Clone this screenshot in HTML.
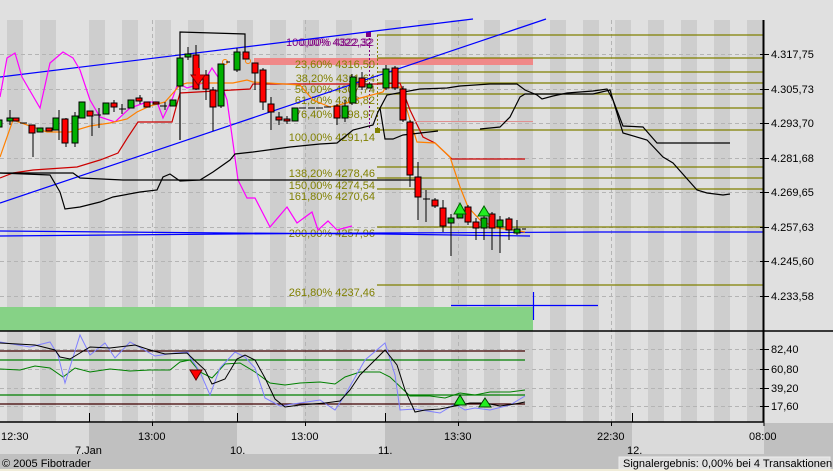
<!DOCTYPE html>
<html><head><meta charset="utf-8"><style>
html,body{margin:0;padding:0;background:#e0e0e0;}
svg{display:block;font-family:"Liberation Sans",sans-serif;}
</style></head><body>
<svg width="833" height="471" viewBox="0 0 833 471" xmlns="http://www.w3.org/2000/svg">
<rect width="833" height="471" fill="#e0e0e0"/>
<!-- stripes -->
<g fill="#cecece">
<rect x="7" y="20" width="16" height="402"/><rect x="40" y="20" width="16" height="402"/>
<rect x="89" y="20" width="16" height="402"/><rect x="122" y="20" width="16" height="402"/>
<rect x="155" y="20" width="16" height="402"/><rect x="188" y="20" width="16" height="402"/>
<rect x="237" y="20" width="16" height="402"/><rect x="270" y="20" width="16" height="402"/>
<rect x="303" y="20" width="16" height="402"/><rect x="336" y="20" width="16" height="402"/>
<rect x="385" y="20" width="16" height="402"/><rect x="418" y="20" width="16" height="402"/>
<rect x="451" y="20" width="16" height="402"/><rect x="484" y="20" width="16" height="402"/>
<rect x="517" y="20" width="16" height="402"/><rect x="550" y="20" width="16" height="402"/>
<rect x="583" y="20" width="16" height="402"/><rect x="615" y="20" width="16" height="402"/>
<rect x="648" y="20" width="16" height="402"/><rect x="681" y="20" width="16" height="402"/>
<rect x="714" y="20" width="16" height="402"/><rect x="747" y="20" width="16" height="402"/>
</g>
<!-- bottom axis area -->
<rect x="0" y="423" width="833" height="48" fill="#c0c0c0"/>
<g fill="#dadada">
<rect x="0" y="423" width="89" height="31"/><rect x="237" y="423" width="148" height="31"/><rect x="632" y="423" width="132" height="31"/>
</g>
<rect x="0" y="469" width="833" height="2" fill="#f0ecd8"/>
<!-- grid -->
<g stroke="#b4b4b4" stroke-dasharray="4,3" stroke-width="1">
<line x1="0" y1="54.5" x2="764" y2="54.5"/><line x1="0" y1="89.5" x2="764" y2="89.5"/>
<line x1="0" y1="123.5" x2="764" y2="123.5"/><line x1="0" y1="158.5" x2="764" y2="158.5"/>
<line x1="0" y1="192.5" x2="764" y2="192.5"/><line x1="0" y1="227.5" x2="764" y2="227.5"/>
<line x1="0" y1="261.5" x2="764" y2="261.5"/><line x1="0" y1="296.5" x2="764" y2="296.5"/>
<line x1="0" y1="349.5" x2="764" y2="349.5"/><line x1="0" y1="369.5" x2="764" y2="369.5"/>
<line x1="0" y1="388.5" x2="764" y2="388.5"/><line x1="0" y1="406.5" x2="764" y2="406.5"/>
<line x1="152.5" y1="20" x2="152.5" y2="422"/><line x1="305.5" y1="20" x2="305.5" y2="422"/>
<line x1="458.5" y1="20" x2="458.5" y2="422"/><line x1="611.5" y1="20" x2="611.5" y2="422"/>
</g>
<!-- bands -->
<rect x="254" y="58" width="279" height="7" fill="#f08888"/>
<rect x="0" y="307" width="533" height="24" fill="#86d286"/>
<!-- fibo lines -->
<g stroke="#808000" stroke-width="1.3">
<line x1="377" y1="35" x2="764" y2="35"/><line x1="377" y1="58" x2="764" y2="58"/>
<line x1="377" y1="72" x2="764" y2="72"/><line x1="377" y1="83" x2="764" y2="83"/>
<line x1="377" y1="94" x2="764" y2="94"/><line x1="377" y1="108" x2="764" y2="108"/>
<line x1="377" y1="130" x2="764" y2="130"/><line x1="377" y1="167" x2="764" y2="167"/>
<line x1="377" y1="178" x2="764" y2="178"/><line x1="377" y1="189" x2="764" y2="189"/>
<line x1="377" y1="227" x2="764" y2="227"/><line x1="377" y1="285" x2="764" y2="285"/>
</g>
<line x1="377.5" y1="35" x2="377.5" y2="130" stroke="#808000" stroke-dasharray="2,2"/>
<line x1="369.5" y1="34" x2="369.5" y2="130" stroke="#800080" stroke-dasharray="2,2"/>
<rect x="366" y="32" width="5" height="5" fill="#800080"/>
<rect x="375" y="128" width="5" height="5" fill="#808000"/>
<g fill="#808000" font-size="11" text-anchor="end">
<text x="375" y="68">23,60% 4316,50</text>
<text x="375" y="82">38,20% 4311,64</text>
<text x="375" y="93">50,00% 4307,74</text>
<text x="375" y="104">61,80% 4303,82</text>
<text x="375" y="118">76,40% 4298,97</text>
<text x="375" y="141">100,00% 4291,14</text>
<text x="375" y="177">138,20% 4278,46</text>
<text x="375" y="189">150,00% 4274,54</text>
<text x="375" y="200">161,80% 4270,64</text>
<text x="375" y="237">200,00% 4257,96</text>
<text x="375" y="296">261,80% 4237,46</text>
</g>
<text x="286" y="46" fill="#800080" font-size="11">100,00% 4322,32</text>
<text x="300" y="46" fill="#800080" font-size="11" opacity="0.8">0,00% 4322,32</text>
<!-- blue lines -->
<g stroke="#0000ff" stroke-width="1.2" fill="none">
<line x1="0" y1="77" x2="473" y2="19"/>
<line x1="0" y1="203" x2="546" y2="19"/>
<polyline points="0,231 230,233 380,234 530,236"/>
<polyline points="0,236 230,234 380,233 600,232 764,232"/>
<line x1="533.5" y1="292" x2="533.5" y2="320"/>
<line x1="451" y1="305.5" x2="598" y2="305.5"/>
</g>
<!-- red, orange, magenta, black -->
<polyline fill="none" stroke="#ff00ff" stroke-width="1.2" points="0,97 7,58 15,53 22,77 40,108 50,63 63,52 73,58 80,70 90,100 100,117 115,122 130,108 147,102 157,102 163,118 173,97 178,83 187,88 197,85 203,83 212,68 220,80 227,100 233,143 238,180 247,198 255,198 270,227 287,207 297,223 312,212 318,230 328,221 337,230 352,226"/>
<polyline fill="none" stroke="#cc0000" stroke-width="1.2" points="0,178 13,173 33,170 77,167 100,160 118,153 128,137 138,122 172,122 180,93 250,89 253,84 380,84 400,83 410,110 423,137 435,143 452,159 525,159"/>
<line x1="415" y1="121.5" x2="533" y2="121.5" stroke="#e09090"/>
<polyline fill="none" stroke="#ff8000" stroke-width="1.2" points="0,157 13,120 47,132 70,132 90,126 110,123 127,119 137,112 150,106 165,102 173,93 180,85 187,83 233,83 247,80 253,82 300,85 313,100 330,107 347,103 353,100 383,92 385,88 400,87 410,120 417,142 435,143 450,157 460,187 468,207 480,220 497,228 513,230 525,232"/>
<circle cx="225" cy="62" r="2.5" fill="none" stroke="#ff8000"/>
<circle cx="248" cy="61" r="2.5" fill="none" stroke="#ff8000"/>
<g fill="none" stroke="#000" stroke-width="1.2">
<polyline points="0,173 73,173 80,178 123,180 420,180"/>
<polyline points="60,192 65,209 80,207 100,202 113,197 140,192 157,190 163,177 170,174 180,181 200,180 213,172 230,160 235,154 253,152 290,147 320,144 337,143 353,130 373,125 378,112 387,95 420,89 447,88 460,86 490,84 517,84 525,90 537,95 542,99 553,96 567,93 593,91 607,89 613,100 623,126 643,127 657,143 730,143"/>
<polyline points="0,173 50,175 60,192"/>
<polyline points="380,108 385,139 393,139 403,135 438,131"/>
<polyline points="480,129 500,127 510,117 520,97 525,94 593,94 610,90 623,133 647,140 663,157 673,163 697,190 707,193 723,195 730,194"/>
<polyline points="180,140 180,32 245,34 245,52"/>
</g>
<!-- candles -->
<g stroke="#000" stroke-width="1">
<line x1="10" y1="110" x2="10" y2="125"/><line x1="33" y1="125" x2="33" y2="157"/>
<line x1="59" y1="110" x2="59" y2="140"/><line x1="66" y1="118" x2="66" y2="147"/><line x1="75" y1="112" x2="75" y2="147"/>
<line x1="92" y1="112" x2="92" y2="136"/><line x1="99" y1="108" x2="99" y2="128"/><line x1="114" y1="100" x2="114" y2="112"/><line x1="122" y1="104" x2="122" y2="114"/><line x1="140" y1="95" x2="140" y2="104"/><line x1="165" y1="102" x2="165" y2="110"/>
<line x1="180" y1="32" x2="180" y2="140"/><line x1="188" y1="47" x2="188" y2="60"/><line x1="196" y1="45" x2="196" y2="90"/>
<line x1="206" y1="70" x2="206" y2="100"/><line x1="213" y1="87" x2="213" y2="131"/><line x1="221" y1="64" x2="221" y2="108"/>
<line x1="237" y1="48" x2="237" y2="72"/><line x1="255" y1="63" x2="255" y2="90"/><line x1="263" y1="68" x2="263" y2="110"/>
<line x1="271" y1="97" x2="271" y2="130"/><line x1="279" y1="112" x2="279" y2="125"/><line x1="287" y1="116" x2="287" y2="124"/>
<line x1="337" y1="104" x2="337" y2="125"/><line x1="345" y1="100" x2="345" y2="122"/><line x1="352" y1="74" x2="352" y2="105"/><line x1="362" y1="72" x2="362" y2="90"/>
<line x1="386" y1="65" x2="386" y2="90"/><line x1="395" y1="66" x2="395" y2="90"/><line x1="403" y1="86" x2="403" y2="122"/>
<line x1="410" y1="120" x2="410" y2="187"/><line x1="418" y1="162" x2="418" y2="220"/><line x1="426" y1="190" x2="426" y2="222"/>
<line x1="435" y1="198" x2="435" y2="208"/><line x1="443" y1="200" x2="443" y2="232"/><line x1="451" y1="214" x2="451" y2="256"/>
<line x1="468" y1="205" x2="468" y2="225"/><line x1="476" y1="218" x2="476" y2="240"/><line x1="484" y1="215" x2="484" y2="240"/>
<line x1="492" y1="212" x2="492" y2="250"/><line x1="500" y1="216" x2="500" y2="253"/><line x1="509" y1="217" x2="509" y2="240"/><line x1="517" y1="220" x2="517" y2="235"/>
</g>
<g stroke="#000" stroke-width="1">
<!-- green -->
<rect x="-3" y="120" width="5" height="7" fill="#00b000"/>
<rect x="7" y="118" width="6" height="3" fill="#00b000"/>
<rect x="37" y="128" width="6" height="4" fill="#00b000"/>
<rect x="53" y="118" width="6" height="12" fill="#00b000"/>
<rect x="72" y="116" width="6" height="27" fill="#00b000"/>
<rect x="79" y="102" width="6" height="16" fill="#00b000"/>
<rect x="103" y="103" width="6" height="11" fill="#00b000"/>
<rect x="128" y="100" width="6" height="8" fill="#00b000"/>
<rect x="170" y="100" width="6" height="6" fill="#00b000"/>
<rect x="177" y="58" width="6" height="28" fill="#00b000"/>
<rect x="185" y="54" width="6" height="3" fill="#00b000"/>
<rect x="218" y="64" width="6" height="42" fill="#00b000"/>
<rect x="234" y="52" width="6" height="18" fill="#00b000"/>
<rect x="292" y="108" width="6" height="13" fill="#00b000"/>
<rect x="342" y="106" width="6" height="12" fill="#00b000"/>
<rect x="350" y="77" width="6" height="26" fill="#00b000"/>
<rect x="367" y="84" width="5" height="4" fill="#00b000"/>
<rect x="383" y="69" width="6" height="19" fill="#00b000"/>
<rect x="448" y="218" width="6" height="5" fill="#00b000"/>
<rect x="457" y="214" width="6" height="4" fill="#00b000"/>
<rect x="481" y="218" width="6" height="10" fill="#00b000"/>
<rect x="497" y="220" width="6" height="7" fill="#00b000"/>
<rect x="514" y="229" width="6" height="4" fill="#00b000"/>
<!-- red -->
<rect x="13" y="118" width="6" height="3" fill="#ff0000"/>
<rect x="29" y="125" width="6" height="8" fill="#ff0000"/>
<rect x="46" y="128" width="6" height="3" fill="#ff0000"/>
<rect x="62" y="119" width="6" height="24" fill="#ff0000"/>
<rect x="87" y="111" width="6" height="5" fill="#ff0000"/>
<rect x="111" y="103" width="6" height="4" fill="#ff0000"/>
<rect x="136" y="98" width="6" height="3" fill="#ff0000"/>
<rect x="144" y="102" width="6" height="5" fill="#ff0000"/>
<rect x="153" y="102" width="6" height="2" fill="#ff0000"/>
<rect x="193" y="55" width="6" height="34" fill="#ff0000"/>
<rect x="203" y="75" width="6" height="14" fill="#ff0000"/>
<rect x="210" y="90" width="6" height="17" fill="#ff0000"/>
<rect x="243" y="52" width="6" height="7" fill="#ff0000"/>
<rect x="252" y="63" width="6" height="10" fill="#ff0000"/>
<rect x="260" y="70" width="6" height="32" fill="#ff0000"/>
<rect x="268" y="104" width="6" height="8" fill="#ff0000"/>
<rect x="276" y="117" width="6" height="3" fill="#ff0000"/>
<rect x="284" y="119" width="6" height="2" fill="#ff0000"/>
<rect x="334" y="106" width="6" height="12" fill="#ff0000"/>
<rect x="359" y="78" width="6" height="9" fill="#ff0000"/>
<rect x="392" y="68" width="6" height="20" fill="#ff0000"/>
<rect x="400" y="89" width="6" height="31" fill="#ff0000"/>
<rect x="407" y="122" width="6" height="53" fill="#ff0000"/>
<rect x="415" y="177" width="6" height="20" fill="#ff0000"/>
<rect x="432" y="200" width="6" height="6" fill="#ff0000"/>
<rect x="440" y="208" width="6" height="18" fill="#ff0000"/>
<rect x="465" y="207" width="6" height="15" fill="#ff0000"/>
<rect x="473" y="222" width="6" height="6" fill="#ff0000"/>
<rect x="489" y="214" width="6" height="14" fill="#ff0000"/>
<rect x="506" y="219" width="6" height="11" fill="#ff0000"/>
<!-- dashes -->
<line x1="20" y1="123" x2="27" y2="123"/><line x1="94" y1="115" x2="101" y2="115"/><line x1="119" y1="109" x2="126" y2="109"/>
<line x1="160" y1="106" x2="167" y2="106"/><line x1="226" y1="62" x2="230" y2="62"/><line x1="299" y1="108" x2="306" y2="108"/>
<line x1="308" y1="108" x2="315" y2="108"/><line x1="316" y1="108" x2="323" y2="108"/><line x1="324" y1="107" x2="331" y2="107"/>
<line x1="423" y1="199" x2="430" y2="199"/><line x1="522" y1="229" x2="526" y2="229"/>
</g>
<!-- arrows -->
<polygon points="191,75 205,75 198,85" fill="#ff0000" stroke="#800000"/>
<rect x="196" y="68" width="4" height="8" fill="#ff0000"/>
<polygon points="460,203 454,214 466,214" fill="#22ee22" stroke="#006000"/>
<polygon points="484,206 478,216 490,216" fill="#22ee22" stroke="#006000"/>
<!-- oscillator -->
<g stroke-width="1.3" fill="none">
<line x1="0" y1="351" x2="525" y2="351" stroke="#400000"/>
<line x1="0" y1="404" x2="525" y2="404" stroke="#400000"/>
<line x1="0" y1="360" x2="525" y2="360" stroke="#008000"/>
<line x1="0" y1="395" x2="525" y2="395" stroke="#008000"/>
<polyline stroke="#008000" stroke-width="1" points="0,369 20,370 35,366 50,368 63,377 75,368 90,372 110,369 130,371 150,370 170,370 180,362 190,360 200,372 212,378 225,364 240,363 255,372 270,383 285,385 300,383 320,382 335,384 345,377 360,372 380,372 390,377 410,396 430,396 445,398 460,393 475,395 490,392 510,392 525,390"/>
<polyline stroke="#8080ff" stroke-width="1" points="0,342 30,347 50,342 58,355 65,383 80,335 90,355 105,343 115,358 130,342 155,356 175,353 188,352 190,357 200,372 210,395 220,368 235,352 245,357 255,368 265,398 280,406 300,403 320,400 335,410 345,395 365,360 385,343 395,375 400,410 415,409 440,413 455,404 465,410 475,408 490,410 510,405 525,396"/>
<polyline stroke="#000" stroke-width="1" points="0,343 35,345 55,350 60,357 70,359 90,347 110,348 135,345 150,350 165,354 187,353 190,356 205,370 212,384 225,379 237,359 245,355 255,360 265,378 275,399 285,407 300,405 325,403 340,401 350,390 360,375 375,360 385,350 397,365 405,390 415,412 425,410 440,409 455,406 470,403 485,403 500,406 515,404 525,402"/>
</g>
<polygon points="190,370 202,370 196,380" fill="#ff0000" stroke="#600000"/>
<polygon points="460,395 454,405 466,405" fill="#22ee22" stroke="#004000"/>
<polygon points="485,398 479,407 491,407" fill="#22ee22" stroke="#004000"/>
<!-- frames -->
<line x1="0" y1="331" x2="833" y2="331" stroke="#000" stroke-width="1.5"/>
<line x1="0" y1="422" x2="764" y2="422" stroke="#000" stroke-width="1.5"/>
<line x1="763.5" y1="20" x2="763.5" y2="422" stroke="#000" stroke-width="2"/>
<g stroke="#000">
<line x1="89.5" y1="413" x2="89.5" y2="422"/><line x1="237.5" y1="413" x2="237.5" y2="422"/>
<line x1="385.5" y1="413" x2="385.5" y2="422"/><line x1="632.5" y1="413" x2="632.5" y2="422"/>
<line x1="152.5" y1="422" x2="152.5" y2="426"/><line x1="305.5" y1="422" x2="305.5" y2="426"/>
<line x1="458.5" y1="422" x2="458.5" y2="426"/><line x1="611.5" y1="422" x2="611.5" y2="426"/>
<line x1="764" y1="422" x2="764" y2="426"/>
<line x1="760" y1="54.5" x2="769" y2="54.5"/><line x1="760" y1="89.5" x2="769" y2="89.5"/>
<line x1="760" y1="123.5" x2="769" y2="123.5"/><line x1="760" y1="158.5" x2="769" y2="158.5"/>
<line x1="760" y1="192.5" x2="769" y2="192.5"/><line x1="760" y1="227.5" x2="769" y2="227.5"/>
<line x1="760" y1="261.5" x2="769" y2="261.5"/><line x1="760" y1="296.5" x2="769" y2="296.5"/>
<line x1="760" y1="349.5" x2="769" y2="349.5"/><line x1="760" y1="369.5" x2="769" y2="369.5"/>
<line x1="760" y1="388.5" x2="769" y2="388.5"/><line x1="760" y1="406.5" x2="769" y2="406.5"/>
</g>
<g fill="#000" font-size="11">
<text x="771" y="58">4.317,75</text><text x="771" y="93">4.305,73</text>
<text x="771" y="127">4.293,70</text><text x="771" y="162">4.281,68</text>
<text x="771" y="196">4.269,65</text><text x="771" y="231">4.257,63</text>
<text x="771" y="265">4.245,60</text><text x="771" y="300">4.233,58</text>
<text x="771" y="353">82,40</text><text x="771" y="373">60,80</text>
<text x="771" y="392">39,20</text><text x="771" y="410">17,60</text>
<text x="1" y="440">12:30</text><text x="138" y="440">13:00</text><text x="291" y="440">13:00</text>
<text x="444" y="440">13:30</text><text x="597" y="440">22:30</text><text x="749" y="440">08:00</text>
<text x="75" y="454">7.Jan</text><text x="230" y="454">10.</text><text x="378" y="454">11.</text><text x="627" y="454">12.</text>
<text x="2" y="467">© 2005 Fibotrader</text>
</g>
<rect x="619" y="457" width="211" height="12" fill="#e0e0e0" stroke="#ececec"/>
<text x="623" y="467" font-size="11" fill="#000">Signalergebnis: 0,00% bei 4 Transaktionen</text>
</svg>
</body></html>
